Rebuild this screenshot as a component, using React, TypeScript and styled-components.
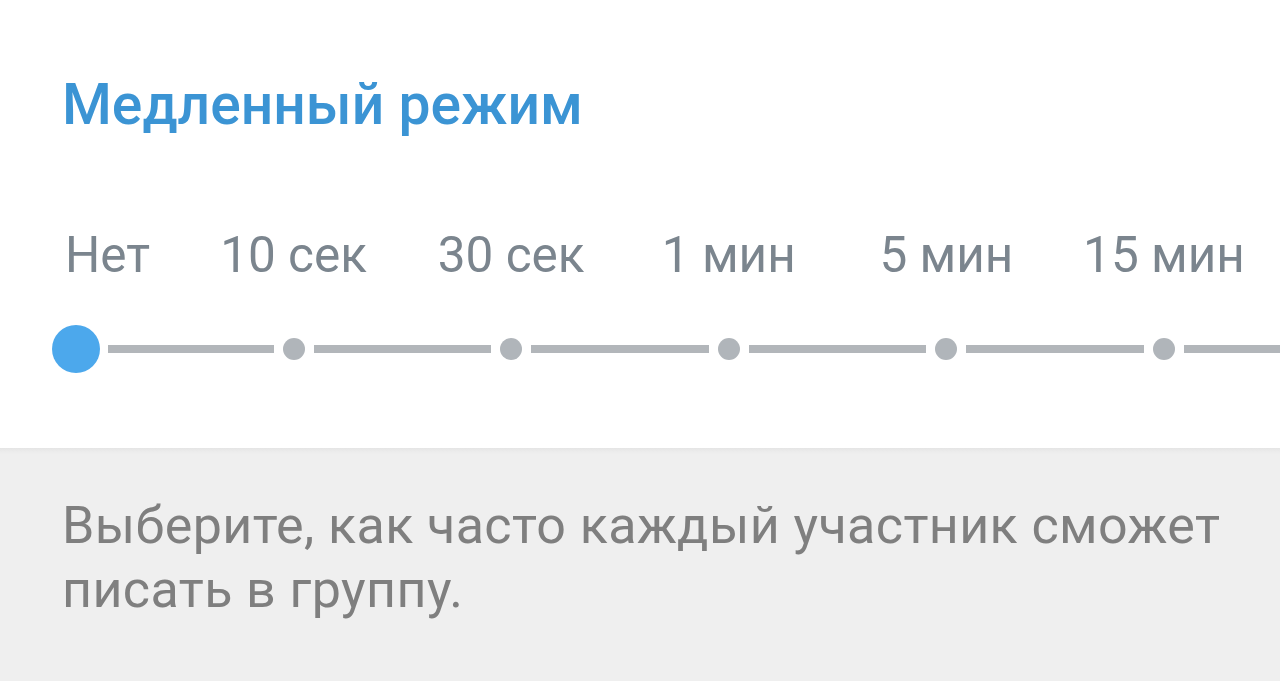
import React from "react";
import styled, { createGlobalStyle } from "styled-components";

const Global = createGlobalStyle`
  html, body { margin: 0; padding: 0; background: #efefef; }
  body { overflow: hidden; font-family: Roboto, "Noto Sans", Arial, sans-serif; }
`;

const COL = 217.6;
const FIRST_CENTER = 76;

const Page = styled.div`
  width: 1280px;
  height: 681px;
  display: flex;
  flex-direction: column;
  overflow: hidden;
`;

const Card = styled.section`
  background: #ffffff;
  height: 448px;
  box-sizing: border-box;
  padding-top: 71px;
  display: flex;
  flex-direction: column;
  overflow: hidden;
`;

const Title = styled.h2`
  margin: 0 0 0 62px;
  font-family: Roboto, sans-serif;
  font-weight: 500;
  font-size: 57px;
  line-height: 68px;
  color: #3b94d4;
`;

const Scale = styled.div`
  margin-top: 88px;
  margin-left: ${FIRST_CENTER - COL / 2}px;
  display: grid;
  grid-template-columns: repeat(7, ${COL}px);
  grid-template-rows: 56px 48px;
  row-gap: 42px;
`;

const Label = styled.span<{ $first?: boolean }>`
  grid-row: 1;
  font-family: Roboto, sans-serif;
  font-weight: 400;
  font-size: 49.5px;
  line-height: 56px;
  color: #7b858e;
  white-space: nowrap;
  justify-self: ${(p) => (p.$first ? "start" : "center")};
  margin-left: ${(p) => (p.$first ? `${65 - (FIRST_CENTER - COL / 2)}px` : "0")};
`;

const Stop = styled.div`
  grid-row: 2;
  display: flex;
  align-items: center;
`;

const Segment = styled.div<{ $hidden?: boolean }>`
  flex: 1;
  height: 8px;
  background: ${(p) => (p.$hidden ? "transparent" : "#b2b6ba")};
`;

const Dot = styled.div`
  width: 22px;
  height: 22px;
  border-radius: 50%;
  background: #b0b5ba;
  margin: 0 9px;
  flex: none;
`;

const Thumb = styled.div`
  width: 48px;
  height: 48px;
  border-radius: 50%;
  background: #4ca8ec;
  margin: 0 8px;
  flex: none;
`;

const Footer = styled.section`
  flex: 1;
  background: linear-gradient(#e4e4e4 0, #ebebeb 3px, #efefef 6px);
  padding: 46px 30px 0 62px;
`;

const Hint = styled.p`
  margin: 0;
  font-family: Roboto, sans-serif;
  font-size: 52px;
  line-height: 64px;
  color: #7f7f7f;
  letter-spacing: 0.4px;
  max-width: 1185px;
`;

const labels = ["Нет", "10 сек", "30 сек", "1 мин", "5 мин", "15 мин"];
const stops = 7;

export default function App() {
  return (
    <>
      <Global />
      <Page>
        <Card>
          <Title>Медленный режим</Title>
          <Scale>
            {labels.map((o, i) => (
              <Label key={o} $first={i === 0}>
                {o}
              </Label>
            ))}
            {Array.from({ length: stops }, (_, i) => (
              <Stop key={i}>
                <Segment $hidden={i === 0} />
                {i === 0 ? <Thumb /> : <Dot />}
                <Segment />
              </Stop>
            ))}
          </Scale>
        </Card>
        <Footer>
          <Hint>Выберите, как часто каждый участник сможет писать в группу.</Hint>
        </Footer>
      </Page>
    </>
  );
}
